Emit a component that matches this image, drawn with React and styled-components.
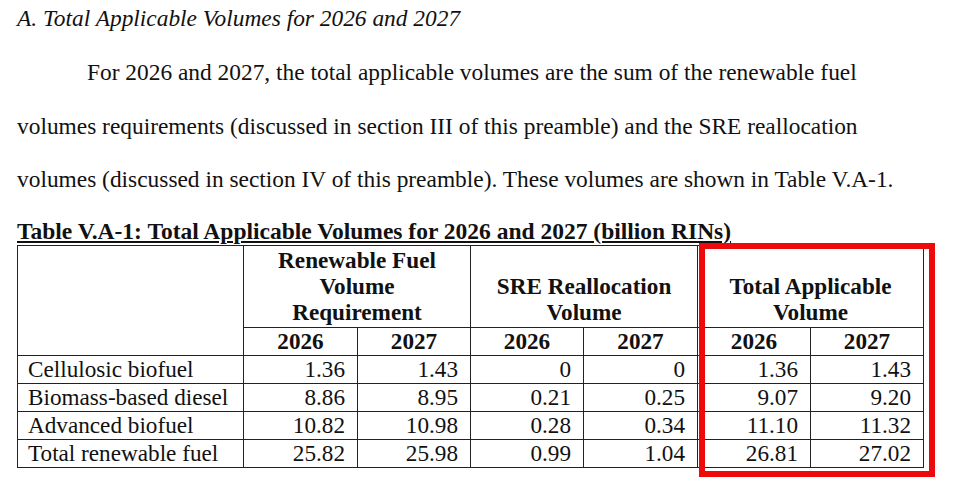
import React from 'react';
import styled, {createGlobalStyle} from 'styled-components';

const GlobalStyle = createGlobalStyle`
  html, body {
    margin: 0;
    padding: 0;
    background: #fff;
  }
  body {
    font-family: "Liberation Serif", "Times New Roman", serif;
    color: #111;
  }
`;

const Page = styled.div`
  width: 960px;
  height: 502px;
  overflow: hidden;
  padding: 4px 0 0 17px;
  box-sizing: border-box;
`;

const Heading = styled.div`
  font-style: italic;
  font-size: 23.4px;
  line-height: 28px;
  white-space: nowrap;
`;

const Paragraph = styled.div`
  font-size: 23.4px;
  line-height: 53.5px;
  margin-top: 14px;
`;

const Line = styled.span`
  display: block;
  white-space: nowrap;
  padding-left: ${({indent}) => (indent ? '70px' : '0')};
`;

const Caption = styled.div`
  font-weight: bold;
  font-size: 23.5px;
  line-height: 24px;
  text-decoration: underline;
  text-underline-offset: 2px;
  white-space: nowrap;
  margin-top: 12px;
`;

const TableWrap = styled.div`
  position: relative;
  width: 906px;
  margin-top: 2px;
`;

const Table = styled.table`
  border-collapse: collapse;
  table-layout: fixed;
  width: 906px;
  font-size: 23.2px;
  border: 1.5px solid #555;
`;

const Head = styled.th`
  border: 1px solid #222;
  font-weight: bold;
  text-align: center;
  line-height: 26px;
  padding: ${({year}) => (year ? '0' : '1px 2px 2px')};
  height: ${({year}) => (year ? '27px' : 'auto')};
  vertical-align: ${({year}) => (year ? 'middle' : 'bottom')};
`;

const Cell = styled.td`
  border: 1px solid #222;
  height: 27px;
  line-height: 24px;
  padding: 0 ${({label}) => (label ? '0 0 10px' : '12px 0 0')};
  text-align: ${({label}) => (label ? 'left' : 'right')};
  white-space: nowrap;
`;

const Highlight = styled.div`
  position: absolute;
  left: 682px;
  top: -2px;
  width: 236px;
  height: 234px;
  border: 6px solid #ee0a0a;
  box-sizing: border-box;
  pointer-events: none;
`;

const widths = [226, 114, 113, 113, 114, 113, 113];

const rows = [
  ['Cellulosic biofuel', '1.36', '1.43', '0', '0', '1.36', '1.43'],
  ['Biomass-based diesel', '8.86', '8.95', '0.21', '0.25', '9.07', '9.20'],
  ['Advanced biofuel', '10.82', '10.98', '0.28', '0.34', '11.10', '11.32'],
  ['Total renewable fuel', '25.82', '25.98', '0.99', '1.04', '26.81', '27.02'],
];

const App = () => (
  <>
    <GlobalStyle/>
    <Page>
      <Heading>A. Total Applicable Volumes for 2026 and 2027</Heading>
      <Paragraph>
        <Line indent>For 2026 and 2027, the total applicable volumes are the sum of the renewable fuel</Line>
        <Line>volumes requirements (discussed in section III of this preamble) and the SRE reallocation</Line>
        <Line>volumes (discussed in section IV of this preamble). These volumes are shown in Table V.A-1.</Line>
      </Paragraph>
      <Caption>Table V.A-1: Total Applicable Volumes for 2026 and 2027 (billion RINs)</Caption>
      <TableWrap>
        <Table>
          <colgroup>
            {widths.map((w, i) => <col key={i} style={{width: w}}/>)}
          </colgroup>
          <thead>
            <tr>
              <Head rowSpan={2}></Head>
              <Head colSpan={2}>Renewable Fuel<br/>Volume<br/>Requirement</Head>
              <Head colSpan={2}>SRE Reallocation<br/>Volume</Head>
              <Head colSpan={2}>Total Applicable<br/>Volume</Head>
            </tr>
            <tr>
              {['2026', '2027', '2026', '2027', '2026', '2027'].map((y, i) =>
                <Head year key={i}>{y}</Head>
              )}
            </tr>
          </thead>
          <tbody>
            {rows.map(r => (
              <tr key={r[0]}>
                {r.map((v, i) => <Cell label={i === 0} key={i}>{v}</Cell>)}
              </tr>
            ))}
          </tbody>
        </Table>
        <Highlight/>
      </TableWrap>
    </Page>
  </>
);

export default App;
